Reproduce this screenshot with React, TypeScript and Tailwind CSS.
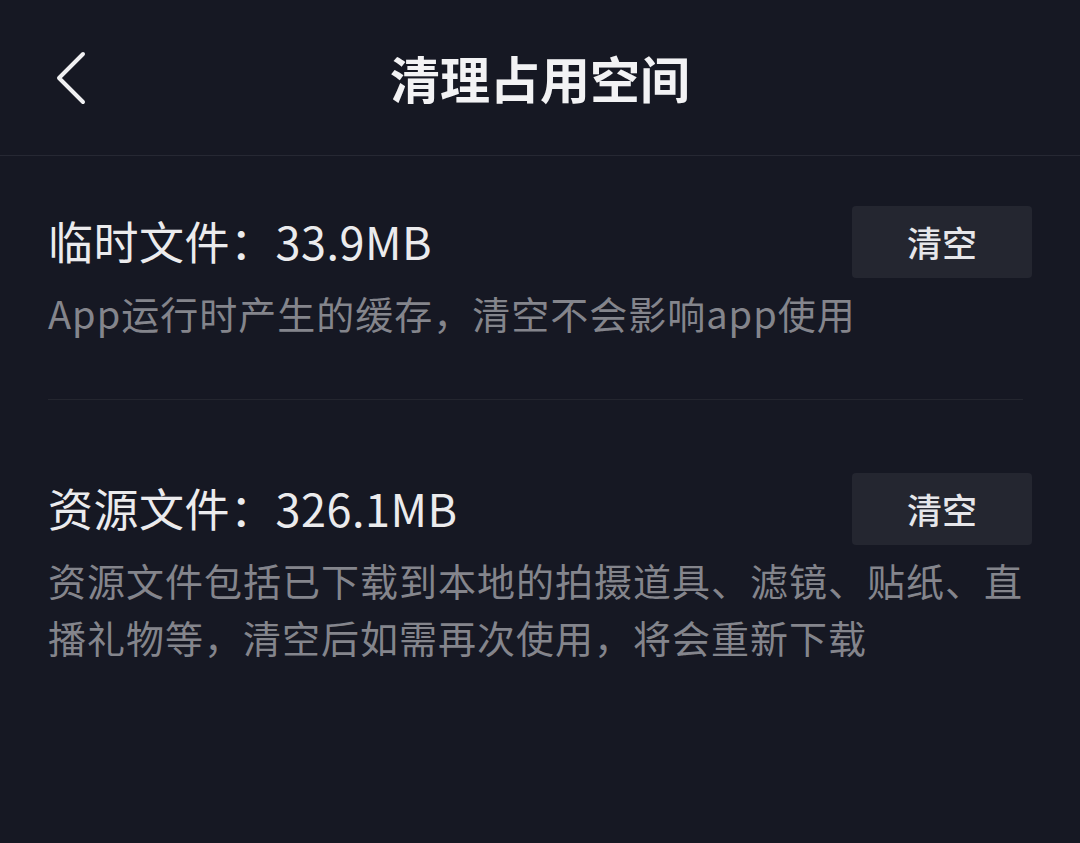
const font = { fontFamily: '"Noto Sans CJK SC", "Noto Sans", sans-serif' }

type Item = {
  label: string
  size: string
  desc: React.ReactNode
}

const items: Item[] = [
  {
    label: '临时文件：',
    size: '33.9MB',
    desc: 'App运行时产生的缓存，清空不会影响app使用',
  },
  {
    label: '资源文件：',
    size: '326.1MB',
    desc: (
      <>
        资源文件包括已下载到本地的拍摄道具、滤镜、贴纸、直
        <br />
        播礼物等，清空后如需再次使用，将会重新下载
      </>
    ),
  },
]

function ClearRow({ item, last }: { item: Item; last: boolean }) {
  return (
    <section className={last ? 'pt-[73px]' : 'pt-[50px] pb-[58px] border-b border-[#24262f] mr-[9px]'}>
      <div className={`flex items-center justify-between ${last ? '' : '-mr-[9px]'}`}>
        <h2 className="text-[45px] leading-[71px] tracking-[0.5px] text-[#ebebed] -mt-[4px]">
          {item.label}
          {item.size}
        </h2>
        <button className="w-[180px] h-[72px] rounded-[4px] bg-[#242630] text-[35px] font-medium text-[#e6e6ea]">
          清空
        </button>
      </div>
      <p className="mt-[6px] text-[38px] leading-[57px] tracking-[1px] text-[#84858c]">{item.desc}</p>
    </section>
  )
}

export default function App() {
  return (
    <div className="w-[1080px] h-[843px] bg-[#161823] overflow-hidden" style={font}>
      <header className="relative h-[156px] flex items-center justify-center border-b border-[#262833]">
        <button className="absolute left-[48px] top-[48px] w-[44px] h-[60px] flex items-center justify-center" aria-label="返回">
          <svg width="34" height="56" viewBox="0 0 34 56" fill="none">
            <path d="M30 4 L6 28 L30 52" stroke="#f0f0f2" strokeWidth="4" strokeLinecap="round" strokeLinejoin="round" />
          </svg>
        </button>
        <h1 className="text-[50px] font-bold text-[#f2f2f4] leading-none -mt-[2px]">清理占用空间</h1>
      </header>
      <main className="px-[48px]">
        {items.map((item, i) => (
          <ClearRow key={item.label} item={item} last={i === items.length - 1} />
        ))}
      </main>
    </div>
  )
}
